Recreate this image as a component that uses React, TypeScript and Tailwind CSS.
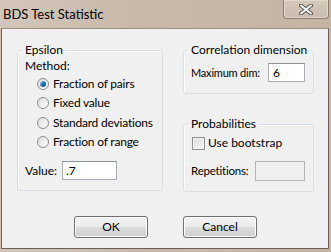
import { useState } from 'react';

const font = { fontFamily: 'Lato, "Open Sans", sans-serif' };

function Radio({ label, checked, onClick }: { label: string; checked: boolean; onClick: () => void }) {
    return (
        <div className="flex h-[19.5px] items-center" onClick={onClick}>
            <span className="ml-[12px] flex h-[12px] w-[12px] shrink-0 items-center justify-center rounded-full border border-[#8d8d8d] bg-gradient-to-br from-[#dcdcdc] to-[#ffffff]">
                {checked && <span className="h-[6px] w-[6px] rounded-full bg-gradient-to-br from-[#a6dcff] via-[#1a72c2] to-[#0c3c7e]" />}
            </span>
            <span className="ml-[4px] tracking-[-0.2px]">{label}</span>
        </div>
    );
}

function Group({ title, className, children }: { title: string; className: string; children: React.ReactNode }) {
    return (
        <fieldset className={`rounded-[3px] border border-[#d5dfe5] pl-[4px] shadow-[inset_1px_1px_0_#ffffff] ${className}`}>
            <legend className="px-[3px] leading-[14px]">{title}</legend>
            <div className="pl-[3px]">{children}</div>
        </fieldset>
    );
}

function Button({ label }: { label: string }) {
    return (
        <button className="h-[22px] w-[74px] rounded-[3px] border border-[#707070] bg-[linear-gradient(#f2f2f2_0%,#ebebeb_50%,#dddddd_50%,#cfcfcf_100%)] shadow-[inset_0_0_0_1px_#fcfcfc] leading-[14px] text-black">
            {label}
        </button>
    );
}

export default function App() {
    const [method, setMethod] = useState('pairs');
    const [bootstrap, setBootstrap] = useState(false);

    const methods = [
        { id: 'pairs', label: 'Fraction of pairs' },
        { id: 'fixed', label: 'Fixed value' },
        { id: 'std', label: 'Standard deviations' },
        { id: 'range', label: 'Fraction of range' },
    ];

    return (
        <div className="h-[252px] w-[331px] whitespace-nowrap bg-[linear-gradient(90deg,#d3c6b9_0%,#c8b9aa_40%,#c4b4a4_100%)] text-[12px] leading-[14px] text-black" style={font}>
            <div className="flex h-[28px] items-start justify-between">
                <div className="ml-[3px] mt-[6px] text-[13px] leading-[16px]">BDS Test Statistic</div>
                <div className="mr-[2px] flex h-[19px] w-[46px] items-center justify-center rounded-b-[4px] border border-t-0 border-[#8a7d70] bg-[linear-gradient(#d6cabd,#c9bbad)] shadow-[inset_0_0_0_1px_#e2d8ce]">
                    <svg width="14" height="11" viewBox="0 0 14 11">
                        <path d="M2 1.5 L12 9.5 M12 1.5 L2 9.5" stroke="#5b5550" strokeWidth="4" strokeLinecap="round" />
                        <path d="M2 1.5 L12 9.5 M12 1.5 L2 9.5" stroke="#ffffff" strokeWidth="2" strokeLinecap="round" />
                    </svg>
                </div>
            </div>
            <div className="ml-[1px] h-[221px] w-[328px] border border-[#6b6057] border-t-[#9c9085] bg-[#f0f0f0]">
                <div className="ml-[15px] mt-[14px] flex gap-[20px]">
                    <Group title="Epsilon" className="h-[148px] w-[146px]">
                        <div className="mt-[1px] flex h-[16px] items-center">Method:</div>
                        {methods.map((m) => (
                            <Radio key={m.id} label={m.label} checked={method === m.id} onClick={() => setMethod(m.id)} />
                        ))}
                        <div className="mt-[9px] flex items-center">
                            <span className="w-[37px] shrink-0">Value:</span>
                            <input className="h-[19px] w-[55px] border border-[#abadb3] border-t-[#8f939b] bg-white px-[3px] outline-none" defaultValue=".7" />
                        </div>
                    </Group>
                    <div className="flex flex-col">
                        <Group title="Correlation dimension" className="h-[51px] w-[131px]">
                            <div className="mt-[6px] flex items-center pr-[8px]">
                                <span className="shrink-0 text-[11px] tracking-[-0.2px]">Maximum dim:</span>
                                <input className="ml-auto h-[19px] w-[37px] border border-[#abadb3] border-t-[#8f939b] bg-white px-[4px] outline-none" defaultValue="6" />
                            </div>
                        </Group>
                        <Group title="Probabilities" className="mt-[23px] h-[75px] w-[131px]">
                            <div className="mt-[5px] flex h-[14px] items-center" onClick={() => setBootstrap(!bootstrap)}>
                                <span className="ml-[1px] flex h-[13px] w-[13px] shrink-0 items-center justify-center border border-[#8f8f8f] bg-[linear-gradient(135deg,#dcdcdc,#f7f7f7)] shadow-[inset_0_0_0_1px_#f4f4f4]">
                                    {bootstrap && <span className="text-[10px] leading-none">✓</span>}
                                </span>
                                <span className="ml-[3px]">Use bootstrap</span>
                            </div>
                            <div className="mt-[11px] flex items-center pr-[8px]">
                                <span className="shrink-0 text-[11.5px] tracking-[-0.2px]">Repetitions:</span>
                                <input disabled className="ml-auto h-[20px] w-[50px] border border-[#b5b5b5] bg-[#f0f0f0] outline-none" />
                            </div>
                        </Group>
                    </div>
                </div>
                <div className="ml-[72px] mt-[24px] flex gap-[35px]">
                    <Button label="OK" />
                    <Button label="Cancel" />
                </div>
            </div>
        </div>
    );
}
